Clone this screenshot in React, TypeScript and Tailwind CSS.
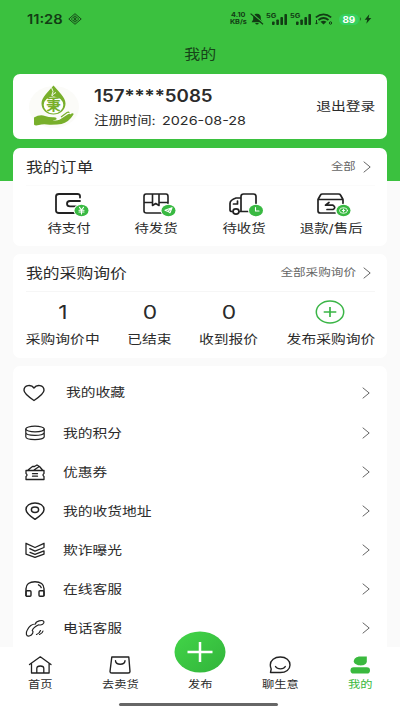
import type { ReactNode } from "react";

const Chevron = () => (
  <svg width="8" height="12" viewBox="0 0 8 12" fill="none" stroke="#666" strokeWidth="1">
    <path d="M.7.7 7.2 6 .7 11.3" />
  </svg>
);

const Icon = ({ w = 32, h = 28, sw = 1.5, children }: { w?: number; h?: number; sw?: number; children: ReactNode }) => (
  <svg
    width={w}
    height={h}
    viewBox={`0 0 ${w} ${h}`}
    fill="none"
    stroke="#222"
    strokeWidth={sw}
    strokeLinecap="round"
    strokeLinejoin="round"
    className="block shrink-0"
  >
    {children}
  </svg>
);

// wide lettering used for all the labels
const Wide = ({ className = "", children }: { className?: string; children: ReactNode }) => (
  <span className={`inline-block whitespace-nowrap scale-x-[1.2] ${className}`}>{children}</span>
);

const SignalBars = () => (
  <div className="flex items-start">
    <span className="text-[6.5px] leading-[6px] font-bold w-[9px]">
      <span className="inline-block origin-left scale-x-[1.15]">5G</span>
    </span>
    <svg width="15" height="13" viewBox="0 0 15 13" fill="currentColor" className="-ml-[3px]">
      <rect x="0" y="8.5" width="2.6" height="3.5" rx=".8" />
      <rect x="4.3" y="6.5" width="2.6" height="5.5" rx=".8" />
      <rect x="8.4" y="4" width="2.6" height="8" rx=".8" />
      <rect x="12.4" y="1" width="2.6" height="11" rx=".8" />
    </svg>
  </div>
);

const StatusBar = () => (
  <div className="h-[38px] flex items-center pl-[27px] text-[#123c14]">
    <span className="text-[13px] leading-none font-semibold w-[41px] shrink-0">
      <span className="inline-block origin-left scale-x-[1.13]">11:28</span>
    </span>
    <svg width="14" height="12" viewBox="0 0 14 12" fill="none" stroke="currentColor" strokeWidth=".9">
      <path d="M7 .7 13.2 6 7 11.3.8 6Z" />
      <path d="M7 2.8 10.8 6 7 9.2 3.2 6ZM5 4.4l4 3.3M9 4.4 5 7.7M7 2.8v6.4" strokeWidth=".7" />
    </svg>
    <div className="ml-[147px] w-[18px] text-[6.3px] leading-[7px] font-bold flex flex-col items-center shrink-0">
      <span className="scale-x-[1.15]">4.10</span>
      <span className="scale-x-[1.15]">KB/s</span>
    </div>
    <svg width="14" height="12" viewBox="0 0 14 12" className="ml-[3px] shrink-0">
      <path d="M7 .8C4.3.8 3.2 2.6 3.2 4.6v2L1.6 9.2h10.8l-1.6-2.6v-2C10.8 2.6 9.7.8 7 .8ZM5.2 10h3.6q-.4 1.5-1.8 1.5T5.2 10Z" fill="currentColor" />
      <path d="M1.5 0 14 10.7" stroke="#3bc13f" strokeWidth="1.2" />
      <path d="M.6.6 13 11.3" stroke="currentColor" strokeWidth="1.2" />
    </svg>
    <div className="flex ml-[2px] gap-[3px]">
      <SignalBars />
      <SignalBars />
    </div>
    <svg width="18" height="12" viewBox="0 0 18 12" fill="none" stroke="currentColor" strokeWidth="1.7" className="ml-[4px] shrink-0">
      <path d="M.8 4.3Q8.500-1.700 16.200 4.300M3.500 7Q8.500 3 13.500 7" />
      <path d="m8.500 11.500-3-2.700q3-2 6 0Z" fill="currentColor" stroke="none" />
      <path d="M1.500 7v4M.2 9.700l1.300 1.400L2.800 9.700" strokeWidth="1" />
      <circle cx="15.5" cy="10" r="1.2" strokeWidth="1" />
    </svg>
    <div className="ml-[6px] w-[20px] h-[11px] rounded-full bg-[#36d05f] text-white text-[9px] leading-[11px] font-bold text-center shrink-0">
      <span className="inline-block scale-x-[1.1]">89</span>
    </div>
    <svg width="12" height="10" viewBox="0 0 12 10" fill="currentColor" className="ml-[1px] shrink-0">
      <path d="M.3 3q1.500 2 0 4Z" />
      <path d="M9.300.3 4.700 5.700h2.500L6.300 9.700l5-5.600H8.600Z" />
    </svg>
  </div>
);

const Logo = () => (
  <svg width="52" height="44" viewBox="0 0 52 44" className="block shrink-0">
    <ellipse cx="26" cy="22" rx="25" ry="21" fill="#fbfbf8" />
    <path d="M25.500.5C21 6 13.500 12 13.500 18.500c0 6.500 5.500 11 12 11s12-4.500 12-11C37.500 12 30 6 25.500.5Z" fill="#78af2b" />
    <path d="M23.500 2.500q3 4 .2 8M28 7.500q-3 1-4 3.500" fill="none" stroke="#fff" strokeWidth=".9" />
    <ellipse cx="25.500" cy="20" rx="9.800" ry="8.600" fill="#fff" />
    <text
      x="25.500"
      y="25.200"
      textAnchor="middle"
      fontSize="14.500"
      fontWeight="700"
      fill="#78af2b"
      className="font-['Noto_Sans_CJK_SC',sans-serif]"
    >
      秉
    </text>
    <path
      d="M6 32.500q6-3.500 11-1.500 4 1.500 9 1.300 3 .2 2.500 1.900-.5 1-4 1 4 .8 7-.5l8.500-5.500q2.500-1 2.300.6L38 33l5.500-4.500q2.300-.8 2 .9-5 8-12 9.500-4 .9-12 .8-7-.8-10.500.3-4 1.200-5-.5Z"
      fill="#78af2b"
    />
    <path d="m33 32 6-4.500q2-1 2 .5" fill="none" stroke="#78af2b" strokeWidth="1.200" />
  </svg>
);

const Badge = ({ x, y, children }: { x: number; y: number; children: ReactNode }) => (
  <g>
    <ellipse cx={x} cy={y} rx="8" ry="6.8" fill="#fff" stroke="none" />
    <ellipse cx={x} cy={y} rx="7" ry="5.8" fill="#39b942" stroke="none" />
    <g stroke="#fff" strokeWidth="1.1">{children}</g>
  </g>
);

const orders = [
  {
    label: "待支付",
    icon: (
      <Icon w={40} sw={1.8}>
        <path d="M31 7.500V6q0-2-2.500-2H10Q7 4 7 6.500v14Q7 23 10 23h17.500M31 11H21q-3 0-3 2.700t3 2.700h8" />
        <Badge x={32.5} y={20.5}>
          <path d="m30.500 17.300 2 2.700 2-2.700M30 20.300h5M30 22h5M32.500 20v4" />
        </Badge>
      </Icon>
    ),
  },
  {
    label: "待发货",
    icon: (
      <Icon w={40} sw={1.6}>
        <path d="M32 15V6.500Q32 4 30 4H10Q8 4 8 6.500V21q0 2 2.500 2H27M8 12.500h8M23 12.500h9M16.500 4v11.500l3.200-2 3.300 2V4" />
        <Badge x={32.5} y={20.5}>
          <path d="m29 20.200 7-2.500-2 5-2-1.300zM32 21.400l4-3.700" />
        </Badge>
      </Icon>
    ),
  },
  {
    label: "待收货",
    icon: (
      <Icon w={40} sw={1.7}>
        <path d="M17 21V6.500Q17 4 19.500 4h10Q32 4 32 6.500V14M16.500 8H12Q6 10 6 13.500V20q0 1.500 2 1.500M16 21.500h11M13.500 11v3h-4" />
        <ellipse cx="12" cy="21.500" rx="3" ry="2.600" fill="#fff" />
        <Badge x={32} y={20.5}>
          <path d="M31.500 17.500v3.500H35" />
        </Badge>
      </Icon>
    ),
  },
  {
    label: "退款/售后",
    icon: (
      <Icon w={40} sw={1.7}>
        <path d="M7 9.500 9.500 5Q10 4 11.500 4h16q1.500 0 2 1L32 9.500ZM7 9.500V21q0 2 2.500 2H24M32 9.500v5M18 12.500l-3.500 2.700H22q3.500 2.300 0 4.300h-6" />
        <Badge x={32.5} y={20.5}>
          <ellipse cx="32.500" cy="20.500" rx="4" ry="2.800" strokeWidth=".8" />
          <path d="M32.500 19v3M31.300 20.500h2.400" strokeWidth=".9" />
        </Badge>
      </Icon>
    ),
  },
];

const inquiries = [
  { count: 1, label: "采购询价中", width: "w-[74px]" },
  { count: 0, label: "已结束", width: "w-[44px]" },
  { count: 0, label: "收到报价", width: "w-[59px]" },
];

const menu = [
  {
    label: "我的积分",
    icon: (
      <Icon w={22} h={20} sw={1.2}>
        <ellipse cx="11" cy="6" rx="9.200" ry="2.800" />
        <path d="M1.800 6v3.600c0 3.800 18.400 3.800 18.400 0V6M1.800 9.800v4c0 3.800 18.400 3.800 18.400 0v-4" />
      </Icon>
    ),
  },
  {
    label: "优惠券",
    icon: (
      <Icon w={22} h={20} sw={1.3}>
        <path d="M2 8.500h18v3q-2 1.500 0 3v3H2v-3q2-1.500 0-3ZM4 8 8.500 4.500h2L13 3l2.500 1.500 3 3.500M10 8l4.500-3M8.500 11.700h5M8.500 14.200h5" />
      </Icon>
    ),
  },
  {
    label: "我的收货地址",
    icon: (
      <Icon w={22} h={20} sw={1.5}>
        <path d="M11 18.300C5 14.500 2 12 2 8.500 2 4.500 6 2 11 2s9 2.500 9 6.500c0 3.500-3 6-9 9.800Z" />
        <ellipse cx="11" cy="8.700" rx="3.600" ry="2.700" />
      </Icon>
    ),
  },
  {
    label: "欺诈曝光",
    icon: (
      <Icon w={22} h={20} sw={1.3}>
        <path d="M2 3.300 11 7.500l9-4.200v3.500M5.800 8.600 11 11.200l9-3.700M2 3.300v10.800l9 3.300 9-3.300v-3.300l-9 3.500-5-2" />
      </Icon>
    ),
  },
  {
    label: "在线客服",
    icon: (
      <Icon w={22} h={20} sw={1.4}>
        <path d="M2 16.500V9.800C2 5.500 5.500 2.700 11 2.700s9 2.800 9 7.100v6.700M14.500 5.800q2.300 1 2.700 2.800" />
        <rect x="2" y="11.800" width="5" height="5.500" rx="1" />
        <rect x="15" y="11.800" width="5" height="5.500" rx="1" />
      </Icon>
    ),
  },
  {
    label: "电话客服",
    icon: (
      <Icon w={22} h={20} sw={1.2}>
        <path d="M11.500 6C11.500 3 18.500 1.500 19.800 3.500c1 2.500-2.500 4-5 3.300C11 8.500 9 10.500 8.300 12.500c1.500 1 .5 4.500-3 5.500-3.300.5-3.800-3-2-6C5 8.500 8.500 6 11.500 6ZM12.500 16.500q3-1 4-4M15.500 16.500q3-1 3.500-3.500" />
      </Icon>
    ),
  },
];

const tabs = [
  {
    label: "首页",
    icon: (
      <Icon w={26} h={20} sw={1.3}>
        <path d="M2.500 9.500 13.300 1.800 24 9.500M4.500 8.500V18h17.600V8.500M9.800 18v-4.500q0-2.500 3.500-2.500t3.500 2.500V18" />
      </Icon>
    ),
  },
  {
    label: "去卖货",
    icon: (
      <Icon w={26} h={20} sw={1.4}>
        <path d="M4.800 2h17L23 16.500q0 1.500-1.800 1.500H4.800Q3 18 3 16.500ZM8.500 5.800c.5 4.500 9 4.500 9.500 0" />
      </Icon>
    ),
  },
  { label: "发布", icon: null },
  {
    label: "聊生意",
    icon: (
      <Icon w={26} h={20} sw={1.4}>
        <path d="M3.500 17.500 4.200 14Q3.300 12 3.300 10C3.300 5.500 7.500 2 13.300 2S23 5.500 23 10s-4 7.500-9.700 7.500ZM8.500 11.500c2 3.200 8 3.200 9.800 0" />
      </Icon>
    ),
  },
  {
    label: "我的",
    icon: (
      <svg width="26" height="20" viewBox="0 0 26 20" fill="#3ab93e" className="block">
        <path d="M19.800 1.500v4.700c0 2.500-2.500 4.200-6 4.200s-7-1.700-7-4.200 2.700-4.700 6.200-4.700Z" />
        <rect x="3.500" y="12.300" width="19.500" height="6.200" rx="3.100" />
      </svg>
    ),
  },
];

const App = () => {
  return (
    <div className="w-[400px] h-[711px] overflow-hidden flex flex-col bg-[linear-gradient(#3bc13f_181px,#fafafa_181px)] font-['Inter','Noto_Sans_CJK_SC',sans-serif] text-[#2b2b2b]">
      <StatusBar />
      <div className="h-[36px] pb-[2px] flex items-center justify-center text-[13.3px] text-[#174419]">
        <Wide>我的</Wide>
      </div>

      <div className="flex flex-col gap-2 px-[13px] h-[573px] overflow-hidden">
        <div className="h-[65px] mb-[1px] shrink-0 rounded-[7px] bg-white flex items-center pl-[15px] pr-3">
          <Logo />
          <div className="ml-[14px] flex-1 flex flex-col gap-[6px] pt-[3px]">
            <span className="text-[17px] leading-[20px] font-semibold">
              <span className="inline-block origin-left scale-x-[1.1]">157****5085</span>
            </span>
            <div className="flex items-center text-[12px] leading-[18px]">
              <span className="w-[68px]">
                <Wide className="origin-left">注册时间:</Wide>
              </span>
              <Wide className="origin-left">2026-08-28</Wide>
            </div>
          </div>
          <Wide className="origin-right text-[12.3px] pt-[2px]">退出登录</Wide>
        </div>

        <div className="h-[98px] shrink-0 rounded-[7px] bg-white">
          <div className="h-[38px] ml-[13px] mr-[12px] pr-[4px] flex items-center justify-between border-b border-[#fbfbfb]">
            <Wide className="origin-left text-[14px]">我的订单</Wide>
            <div className="flex items-center gap-[7px] text-[#666]">
              <Wide className="origin-right text-[10.3px]">全部</Wide>
              <Chevron />
            </div>
          </div>
          <div className="grid grid-cols-4 px-[12px] pt-[4px]">
            {orders.map((item) => (
              <div key={item.label} className="flex flex-col items-center">
                {item.icon}
                <Wide className="text-[12px] leading-[20px] mt-[1px]">{item.label}</Wide>
              </div>
            ))}
          </div>
        </div>

        <div className="h-[104px] shrink-0 rounded-[7px] bg-white">
          <div className="h-[38px] ml-[13px] mr-[12px] pr-[4px] flex items-center justify-between border-b border-[#f6f6f6]">
            <Wide className="origin-left text-[14px]">我的采购询价</Wide>
            <div className="flex items-center gap-[7px] text-[#666]">
              <Wide className="origin-right text-[10.5px]">全部采购询价</Wide>
              <Chevron />
            </div>
          </div>
          <div className="flex justify-between pl-[13px] pr-[12px] pt-[7px]">
            {inquiries.map((item) => (
              <div key={item.label} className={`flex flex-col items-center ${item.width}`}>
                <Wide className="text-[19px] leading-[28px]">{item.count}</Wide>
                <Wide className="text-[12.3px] leading-[20px] mt-[3px]">{item.label}</Wide>
              </div>
            ))}
            <div className="flex flex-col items-center w-[89px]">
              <svg width="30" height="26" viewBox="0 0 30 26" fill="none" stroke="#3ab546" className="block">
                <ellipse cx="15" cy="13" rx="13.700" ry="11" strokeWidth="1.500" />
                <path d="M8.700 13h12.600M15 8v10" strokeWidth="1.700" />
              </svg>
              <Wide className="text-[12.3px] leading-[20px] mt-[5px]">发布采购询价</Wide>
            </div>
          </div>
        </div>

        <div className="h-[290px] shrink-0 rounded-t-[7px] bg-white pt-[7px]">
          <div className="h-[40px] flex items-center pl-[9px] pr-[17px]">
            <Icon w={24} h={20} sw={1.4}>
              <path d="M12 17.500C6 13.500 2 10.500 2 7.300 2 1.500 9.500 1.300 12 5c2.500-3.700 10-3.500 10 2.300 0 3.200-4 6.200-10 10.200Z" />
            </Icon>
            <span className="ml-[20px] flex-1 text-[12.3px] pt-[1px]">
              <Wide className="origin-left">我的收藏</Wide>
            </span>
            <Chevron />
          </div>
          {menu.map((item) => (
            <div key={item.label} className="h-[39px] flex items-center pl-[11px] pr-[17px]">
              {item.icon}
              <span className="ml-[17px] flex-1 text-[12.3px] pt-[3px]">
                <Wide className="origin-left">{item.label}</Wide>
              </span>
              <Chevron />
            </div>
          ))}
        </div>
      </div>

      <div className="h-[64px] shrink-0 bg-white">
        <div className="grid grid-cols-5 h-[56px]">
          {tabs.map((tab) => (
            <div
              key={tab.label}
              className={`relative flex flex-col items-center pt-[8px] ${tab.label === "我的" ? "text-[#3ab93e]" : ""}`}
            >
              {tab.icon ?? (
                <>
                  <div className="h-[20px]" />
                  <svg width="52" height="42" viewBox="0 0 52 42" className="absolute -top-[16px] left-[14px]">
                    <defs>
                      <linearGradient id="publish" x1="0" y1="0" x2="1" y2="1">
                        <stop offset="0" stopColor="#42d548" />
                        <stop offset="1" stopColor="#32b43b" />
                      </linearGradient>
                    </defs>
                    <ellipse cx="26" cy="21" rx="25.500" ry="20.500" fill="url(#publish)" />
                    <path d="M13.500 21h25M26 11v20" stroke="#fff" strokeWidth="2.500" />
                  </svg>
                </>
              )}
              <Wide className="text-[10.2px] leading-[16px] mt-[1px]">{tab.label}</Wide>
            </div>
          ))}
        </div>
        <div className="w-[159px] h-[3px] ml-[119px] rounded-full bg-[#666]" />
      </div>
    </div>
  );
};

export default App;
